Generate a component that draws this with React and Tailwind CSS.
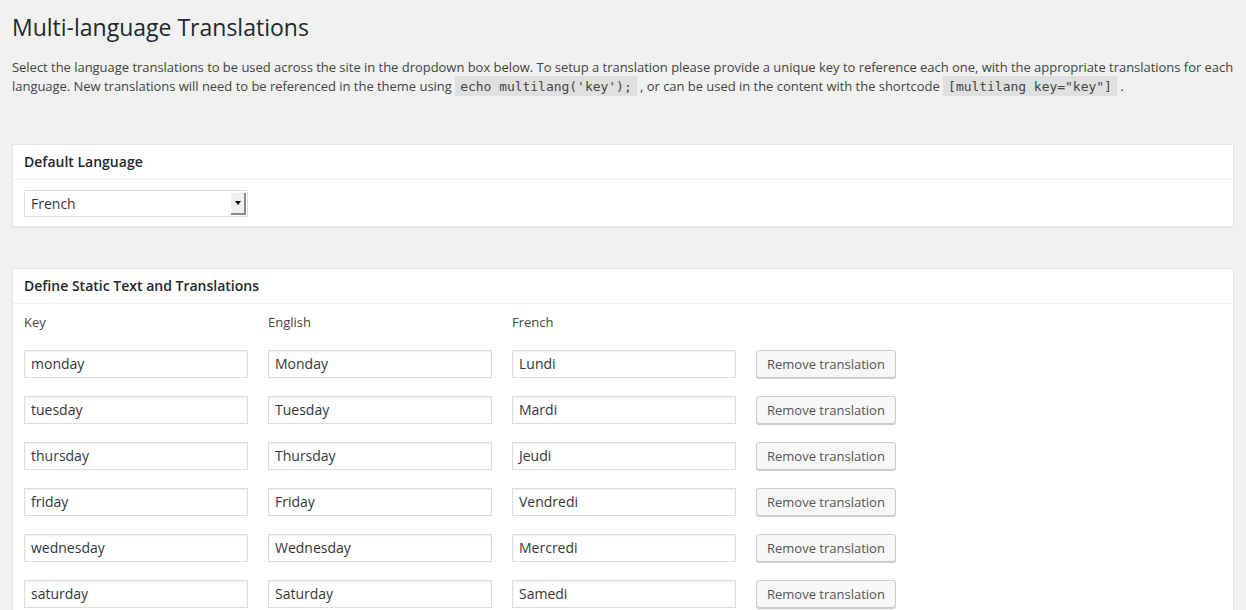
import React from 'react';

const rows = [
  { key: 'monday', en: 'Monday', fr: 'Lundi' },
  { key: 'tuesday', en: 'Tuesday', fr: 'Mardi' },
  { key: 'thursday', en: 'Thursday', fr: 'Jeudi' },
  { key: 'friday', en: 'Friday', fr: 'Vendredi' },
  { key: 'wednesday', en: 'Wednesday', fr: 'Mercredi' },
  { key: 'saturday', en: 'Saturday', fr: 'Samedi' },
  { key: 'sunday', en: 'Sunday', fr: 'Dimanche' },
];

function Code({ children }) {
  return (
    <code className="bg-black/[0.07] px-[5px] pt-[3px] pb-[2px] text-[13px] font-['DejaVu_Sans_Mono',monospace] text-[#444]">
      {children}
    </code>
  );
}

function TextInput({ value }) {
  return (
    <div className="h-[28px] border border-[#ddd] bg-white shadow-[inset_0_1px_2px_rgba(0,0,0,0.07)] px-[6px] text-[14px] leading-[26px] text-[#32373c]">
      {value}
    </div>
  );
}

function Panel({ title, children }) {
  return (
    <div className="bg-white border border-[#e5e5e5] shadow-[0_1px_1px_rgba(0,0,0,0.04)]">
      <div className="border-b border-[#eee] px-[11px] py-[8px] text-[14px] leading-[18px] font-semibold text-[#23282d]">
        {title}
      </div>
      {children}
    </div>
  );
}

export default function App() {
  return (
    <div className="min-h-screen bg-[#f1f1f1] px-3 font-['Open_Sans',sans-serif] text-[#444] overflow-hidden">
      <h1 className="pt-[13px] text-[23px] leading-[29px] font-normal text-[#23282d]">
        Multi-language Translations
      </h1>
      <p className="mt-[16px] -mr-[14px] text-[13px] leading-[19px] tracking-[-0.03px]">
        Select the language translations to be used across the site in the dropdown box below. To setup a translation please provide a unique key to reference each one, with the appropriate translations for each language. New translations will need to be referenced in the theme using{' '}
        <Code>echo multilang('key');</Code> , or can be used in the content with the shortcode{' '}
        <Code>[multilang key="key"]</Code> .
      </p>

      {/* Default language */}
      <div className="mt-[48px]">
        <Panel title="Default Language">
          <div className="px-[11px] pt-[10px] pb-[9px]">
            <div className="w-[224px] h-[27px] border border-[#ddd] bg-white flex items-center justify-between pl-[6px] pr-[1px] text-[14px] text-[#32373c]">
              <span>French</span>
              <span className="w-[15px] h-[22px] bg-[#f0f0f0] border-r-2 border-b-2 border-[#888] flex items-center justify-center">
                <span className="w-0 h-0 border-l-[3px] border-r-[3px] border-t-[4px] border-l-transparent border-r-transparent border-t-black" />
              </span>
            </div>
          </div>
        </Panel>
      </div>

      {/* Translations */}
      <div className="mt-[41px]">
        <Panel title="Define Static Text and Translations">
          <div className="px-[11px] pt-[9px] pb-4 flex flex-col gap-[18px]">
            <div className="grid grid-cols-[224px_224px_224px_auto] gap-x-[20px] text-[13px] leading-[19px] text-[#444]">
              <span>Key</span>
              <span>English</span>
              <span>French</span>
              <span />
            </div>
            {rows.map((r) => (
              <div key={r.key} className="grid grid-cols-[224px_224px_224px_auto] gap-x-[20px] items-center">
                <TextInput value={r.key} />
                <TextInput value={r.en} />
                <TextInput value={r.fr} />
                <div className="flex">
                  <button className="h-[28px] -mt-[1px] px-[10px] border border-[#ccc] bg-[#f7f7f7] rounded-[3px] shadow-[0_1px_0_#ccc] text-[13px] leading-[26px] text-[#555]">
                    Remove translation
                  </button>
                </div>
              </div>
            ))}
          </div>
        </Panel>
      </div>
    </div>
  );
}
